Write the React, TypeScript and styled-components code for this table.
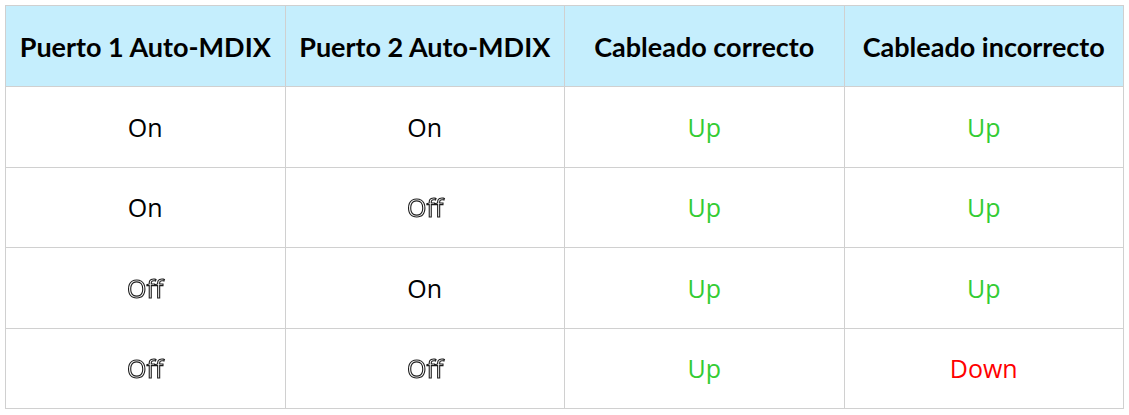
import styled, { createGlobalStyle } from "styled-components";

const Global = createGlobalStyle`
  body {
    margin: 0;
    background: #ffffff;
    font-family: "Open Sans", "Liberation Sans", sans-serif;
  }
`;

const Page = styled.div`
  padding: 5px 6px 0 5px;
`;

const Table = styled.table`
  width: 1119px;
  border-collapse: collapse;
  table-layout: fixed;
`;

const Head = styled.th`
  height: 80px;
  background: #c5eefd;
  border: 1px solid #d0d0d0;
  font-family: Lato, "Liberation Sans", sans-serif;
  font-weight: 700;
  font-size: 27px;
  color: #000;
  text-align: center;
  padding: 0;
`;

type Tone = "plain" | "up" | "down" | "off";

const toneColor: Record<Tone, string> = {
  plain: "#000000",
  up: "#33cc33",
  down: "#ff0000",
  off: "#ffffff",
};

const Cell = styled.td<{ $tone: Tone }>`
  height: 79.5px;
  border: 1px solid #d0d0d0;
  text-align: center;
  font-size: 25px;
  padding: 0;
  color: ${(p) => toneColor[p.$tone]};
`;

const Outlined = styled.span`
  display: inline-block;
  color: #ffffff;
  -webkit-text-stroke: 1.1px #1a1a1a;
  will-change: transform;
`;

const headers = [
  "Puerto 1 Auto-MDIX",
  "Puerto 2 Auto-MDIX",
  "Cableado correcto",
  "Cableado incorrecto",
];

const rows: string[][] = [
  ["On", "On", "Up", "Up"],
  ["On", "Off", "Up", "Up"],
  ["Off", "On", "Up", "Up"],
  ["Off", "Off", "Up", "Down"],
];

function toneOf(v: string): Tone {
  if (v === "Up") return "up";
  if (v === "Down") return "down";
  if (v === "Off") return "off";
  return "plain";
}

export default function App() {
  return (
    <Page>
      <Global />
      <Table>
        <thead>
          <tr>
            {headers.map((h) => (
              <Head key={h}>{h}</Head>
            ))}
          </tr>
        </thead>
        <tbody>
          {rows.map((r, i) => (
            <tr key={i}>
              {r.map((v, j) => (
                <Cell key={j} $tone={toneOf(v)}>
                  {v === "Off" ? <Outlined>{v}</Outlined> : v}
                </Cell>
              ))}
            </tr>
          ))}
        </tbody>
      </Table>
    </Page>
  );
}
